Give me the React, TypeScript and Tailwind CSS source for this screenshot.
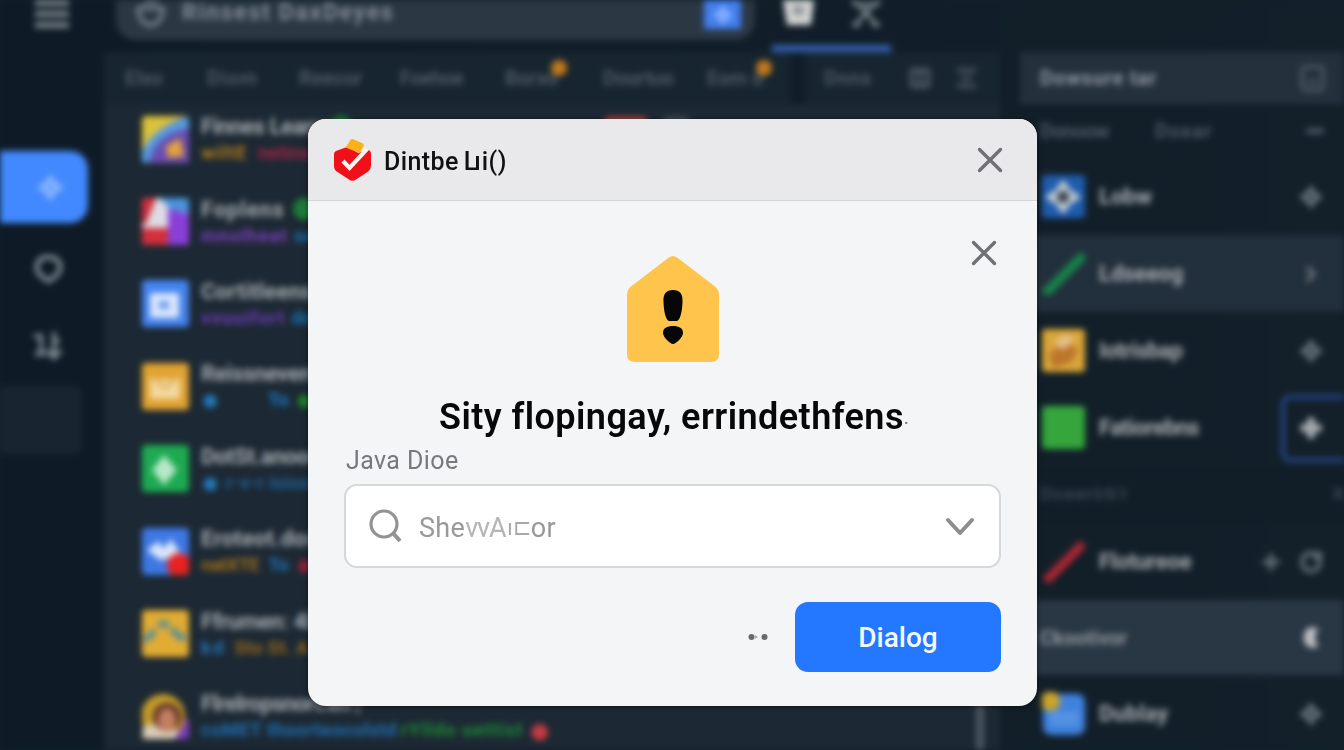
import type { ReactNode } from "react";
import { ChevronRight, Columns2, Minus, Plus, RotateCw } from "lucide-react";

interface Tag {
  text: string;
  className: string;
}

interface Item {
  title: string;
  titleClass: string;
  icon: ReactNode;
  tags: Tag[];
  badge?: boolean;
}

const ITEMS: Item[] = [
  {
    title: "Finnes Learns",
    titleClass: "tracking-[-0.4px] w-[121px]",
    badge: true,
    icon: (
      <>
        <rect width="47" height="47" fill="#dbc23a" />
        <path d="M47 0v47H0C4 22 20 8 47 0Z" fill="#4b86d6" />
        <path d="M8 47C12 27 25 17 47 13v34Z" fill="#6c4bb0" />
        <path d="M0 47C5 25 22 10 47 8" fill="none" stroke="#5a9be0" strokeWidth="7" />
        <path d="M24 30l14-8 4 18-16 2Z" fill="#e2a43c" />
      </>
    ),
    tags: [
      { text: "wiltE", className: "text-[#b07c1e] tracking-[1px]" },
      { text: "netins", className: "text-[#9a2646] ml-1" },
    ],
  },
  {
    title: "Foplens",
    titleClass: "tracking-[0.8px] w-[84px]",
    badge: true,
    icon: (
      <>
        <rect width="47" height="47" fill="#dddce3" />
        <path d="M0 0h14L4 26H0ZM0 30h26v17H0Z" fill="#d32f3c" />
        <path d="M26 10l21 6v31H26Z" fill="#8a3fd8" />
        <path d="M17 0h30v15L30 12Z" fill="#4a94dd" />
      </>
    ),
    tags: [
      { text: "mnolheat", className: "text-[#7440b6] tracking-[0.8px]" },
      { text: "sow", className: "text-[#1d6fab]" },
    ],
  },
  {
    title: "Cortitleens",
    titleClass: "tracking-[0.2px]",
    icon: (
      <>
        <rect width="47" height="47" fill="#4483ee" />
        <rect x="8" y="13" width="29" height="25" fill="#dbe7fc" />
        <rect x="17" y="21" width="10" height="8" fill="#6a9bee" />
      </>
    ),
    tags: [
      { text: "vvuuifort", className: "text-[#6a3cb0] tracking-[0.8px]" },
      { text: "dow", className: "text-[#1d6fab]" },
    ],
  },
  {
    title: "Reissnevents",
    titleClass: "tracking-[-0.3px]",
    icon: (
      <>
        <rect width="47" height="47" fill="#e0a231" />
        <path d="M8 12l8 4 14 0 8-4v24H8Z" fill="#f3d9a0" />
        <path d="M9 13l14 12 14-12" fill="none" stroke="#dfae58" strokeWidth="3" />
      </>
    ),
    tags: [
      { text: "●", className: "text-[#2577b8] w-[61px] text-[31px]" },
      { text: "To", className: "text-[#1e78c8]" },
      { text: "●", className: "text-[#217f2b] text-[31px]" },
    ],
  },
  {
    title: "DotSt.anoone",
    titleClass: "tracking-[-0.3px]",
    icon: (
      <>
        <rect width="47" height="47" fill="#1daa51" />
        <path d="M22 10l13 15-13 15-12-15Z" fill="#b9e8c9" />
      </>
    ),
    tags: [
      { text: "●", className: "text-[#2577b8] text-[31px]" },
      { text: "r-v-r isiosie", className: "text-[#205f94]" },
    ],
  },
  {
    title: "Eroteot.dox",
    titleClass: "tracking-[0.2px]",
    icon: (
      <>
        <rect width="47" height="47" fill="#3d78e4" />
        <path d="M5 22l12-9 4 8 8-10 11 17-22 4Z" fill="#dce8fb" />
        <circle cx="37" cy="37" r="12" fill="#e8231f" />
      </>
    ),
    tags: [
      { text: "natXTE", className: "text-[#9a6b1e] tracking-[-0.6px]" },
      { text: "To", className: "text-[#2173b2] ml-[3px]" },
      { text: "●", className: "text-[#8f2038] text-[31px]" },
    ],
  },
  {
    title: "Ffrumen: 4b",
    titleClass: "tracking-[-0.3px]",
    icon: (
      <>
        <rect width="47" height="47" fill="#e2ac33" />
        <path d="M2 29c6 0 8-5 10-9M16 14h11M30 18c3 5 5 9 14 10" fill="none" stroke="#5d8f94" strokeWidth="7" />
      </>
    ),
    tags: [
      { text: "kd", className: "text-[#2272b4] w-[27px] tracking-[2px]" },
      { text: "Sto St. A o", className: "text-[#8f641e]" },
    ],
  },
  {
    title: "Flrelropsnort.en |",
    titleClass: "tracking-[-0.6px]",
    icon: (
      <>
        <path d="M14 47h33V26Z" fill="#7a3fb8" />
        <circle cx="21" cy="24" r="22" fill="#c39b2c" />
        <path d="M1 35c8-5 28-3 36 6l-5 6H0Z" fill="#d9cdb8" />
        <circle cx="25" cy="25" r="14" fill="#5d3024" />
        <ellipse cx="25" cy="28" rx="9" ry="12" fill="#c47f63" />
      </>
    ),
    tags: [
      { text: "coMET thoorteocolstd", className: "text-[#1f6dad] w-[194px] tracking-[0.3px]" },
      { text: "rYlldo uettist", className: "text-[#1d8637] w-[121px] tracking-[0.9px]" },
      { text: "●", className: "text-[#c63a44] text-[38px]" },
    ],
  },
];

function Thumb({ children, size = 47 }: { children: ReactNode; size?: number }) {
  return (
    <svg width={size} height={size} viewBox="0 0 47 47" className="shrink-0 rounded-[4px]">
      {children}
    </svg>
  );
}

// small four-pointed marker used on the side rows
function Spark({ size = 24, className }: { size?: number; className?: string }) {
  return (
    <svg width={size} height={size} viewBox="0 0 24 24" fill="currentColor" className={className}>
      <path d="M12 0l5 7 7 5-7 5-5 7-5-7-7-5 7-5Zm0 9-3 3 3 3 3-3Z" fillRule="evenodd" />
    </svg>
  );
}

function ListRow({ item }: { item: Item }) {
  return (
    <div className="flex h-[82.4px] items-center gap-[12px] pl-[38px]">
      <Thumb>{item.icon}</Thumb>
      <div className="font-bold whitespace-nowrap">
        <div className="flex items-center gap-2 text-[22px] leading-[25px] text-[#a2a8ae]">
          <span className={item.titleClass}>{item.title}</span>
          {item.badge && <span className="size-[22px] rounded-full bg-[#1d7c37]" />}
        </div>
        <div className="flex h-[25px] gap-1.5 text-[19px] leading-[28px]">
          {item.tags.map((tag, i) => (
            <span key={i} className={tag.className}>
              {tag.text}
            </span>
          ))}
        </div>
      </div>
    </div>
  );
}

function Sidebar() {
  return (
    <aside className="flex w-[104px] shrink-0 flex-col text-[#828b92]">
      <div className="flex h-[151px] justify-center">
        <svg width="34" height="28" className="-ml-px" fill="#777f86">
          <path d="M0 0h34v6H0zM0 11h34v6H0zM0 22h34v6H0z" />
        </svg>
      </div>
      <div className="flex h-[72px] w-[88px] items-center justify-end rounded-r-[18px] bg-[#4289ff] pr-[24px]">
        <Spark size={27} className="text-[#8ab5ff]" />
      </div>
      <div className="flex h-[91px] items-center pl-[34px]">
        <svg width="29" height="31" fill="none" stroke="#828b92" strokeWidth="4.500">
          <path d="M14.500 28C7 23 2 20 3 13c1-6 5-9 11.500-9S25 7 26 13c1 7-4 10-11.500 15Z" />
        </svg>
      </div>
      <div className="flex h-[64px] items-center pl-[32px]">
        <svg width="31" height="28" fill="none" stroke="#828b92" strokeWidth="4">
          <path d="M2 4h7v18M3 22h11M22 0v26M15 18l7 8 7-8M22 9h6" />
        </svg>
      </div>
      <div className="mt-[8px] h-[68px] w-[82px] rounded-r-lg bg-[#182530]" />
    </aside>
  );
}

function TopBar() {
  return (
    <header className="flex h-[52px] shrink-0 pl-[12px]">
      <div className="flex h-[40px] w-[639px] rounded-b-[20px] bg-[#2b3844] pr-[14px] pl-[20px]">
        <svg width="29" height="27" fill="none" stroke="#77818a" strokeWidth="4">
          <path d="M2 7c0 24 25 24 25 0M2 8h25M8 1h14" />
        </svg>
        <span className="ml-[17px] text-[23px] leading-[26px] font-bold tracking-[1.7px] whitespace-nowrap text-[#828c94]">
          Rinsest DaxDeyes
        </span>
        <div className="ml-auto flex h-[29px] w-[37px] items-center justify-center bg-[#437fee]">
          <Spark size={20} className="text-[#8db6ff]" />
        </div>
      </div>
      <div className="ml-[17px] flex h-[54px] w-[119px] gap-[37px] border-b-[9px] border-[#315eae] pl-[11px]">
        <svg width="31" height="27">
          <path d="M0 0h31l-3 25H4Z" fill="#d2d3d2" />
          <path d="M10 6h11v9H10z" fill="#92979a" />
        </svg>
        <svg width="30" height="27" fill="none" stroke="#7f878e" strokeWidth="3.500">
          <path d="M3 0v6M27 0v6M5 2l20 22M25 2 5 24M1 25h8M21 25h8M10 4h10" />
        </svg>
      </div>
    </header>
  );
}

function Flagged({ children, className }: { children: ReactNode; className: string }) {
  return (
    <span className={className}>
      <span className="relative">
        {children}
        <span className="absolute -top-[6px] -right-[9px] size-[16px] rounded-full bg-[#c07a1e]" />
      </span>
    </span>
  );
}

function MainPanel() {
  return (
    <main className="relative flex w-[896px] shrink-0 flex-col bg-[#1c2833]">
      <div className="flex h-[52px] shrink-0 items-center bg-[#172530] text-[20px] font-bold text-[#4b5762]">
        <span className="w-[83px] pl-[21px]">Elxo</span>
        <span className="w-[92px] pl-[20px] tracking-[1px]">Diom</span>
        <span className="w-[103px] pl-[20px]">Reecor</span>
        <span className="w-[103px] pl-[18px] tracking-[-0.5px]">Foehoe</span>
        <Flagged className="w-[98px] pl-[20px]">Borxd</Flagged>
        <span className="w-[103px] pl-[20px] tracking-[-0.3px]">Dourtuo</span>
        <Flagged className="w-[101px] pl-[21px]">Eom d</Flagged>
        <span className="ml-[3px] h-full w-[15px] bg-[#101d29]" />
        <span className="w-[95px] pl-[19px] tracking-[0.5px]">Dnns</span>
        <span className="flex gap-[25px] pl-[9px]">
          <Columns2 size={22} strokeWidth={5} />
          <svg width="21" height="22" fill="none" stroke="currentColor" strokeWidth="4">
            <path d="M1 3h19M5 11h11M1 19h19" />
          </svg>
        </span>
      </div>
      <div className="-mt-[6px]">
        {ITEMS.map((item) => (
          <ListRow key={item.title} item={item} />
        ))}
      </div>
      {/* status chips of the first row */}
      <div className="absolute top-[65px] left-[501px] flex gap-[16px]">
        <span className="h-6 w-[42px] rounded bg-[#b3463c]" />
        <span className="h-6 w-[26px] rounded bg-[#44505b]" />
      </div>
      {/* scrollbar */}
      <div className="absolute right-[16px] bottom-0 h-[138px] w-[8px] bg-[#4a5560]" />
    </main>
  );
}

interface SideRowProps {
  icon: ReactNode;
  label: string;
  labelClass?: string;
  active?: boolean;
  action?: ReactNode;
}

function SideRow({ icon, label, labelClass, active, action }: SideRowProps) {
  return (
    <div className={`flex h-[77px] shrink-0 items-center pr-[21px] pl-[22px] ${active ? "bg-[#222f3c]" : ""}`}>
      <Thumb size={43}>{icon}</Thumb>
      <span className={`ml-[14px] text-[22px] font-bold text-[#a8acb1] ${labelClass ?? ""}`}>{label}</span>
      <span className="ml-auto flex gap-[16px] text-[#68717a]">{action}</span>
    </div>
  );
}

function RightPanel() {
  return (
    <section className="ml-[20px] flex w-[324px] shrink-0 flex-col">
      <div className="flex h-[52px] shrink-0 items-center justify-between bg-[#24303c] pr-[19px] pl-[20px]">
        <span className="text-[20px] font-bold tracking-[0.8px] text-[#8d969f]">Dowsure tar</span>
        <svg width="25" height="27" fill="none" stroke="#56616c" strokeWidth="3">
          <rect x="2" y="2" width="21" height="23" rx="4" />
          <path d="M7 17h11" />
        </svg>
      </div>
      <div className="flex h-[54px] shrink-0 items-center pl-[20px] text-[20px] font-bold text-[#4b5661]">
        <span className="w-[115px] tracking-[-0.6px]">Donoow</span>
        <span className="tracking-[1px]">Doxar</span>
        <Minus size={22} strokeWidth={6} className="mr-[18px] ml-auto" />
      </div>
      <SideRow
        label="Lobw"
        icon={
          <>
            <rect width="47" height="47" fill="#1f5cae" />
            <path d="M23 5l8 11 12 8-12 8-8 11-8-11-12-8 12-8Z" fill="#c8cfd2" />
            <circle cx="23" cy="24" r="7" fill="#3c4856" />
          </>
        }
        action={<Spark />}
      />
      <SideRow
        active
        label="Ldseeog"
        icon={<path d="M3 46 46 3" stroke="#17834a" strokeWidth="10" />}
        action={<ChevronRight size={24} strokeWidth={4} />}
      />
      <SideRow
        label="Iotrisbap"
        labelClass="tracking-[-0.5px]"
        icon={
          <>
            <rect width="47" height="47" fill="#d9a538" />
            <path d="M7 28 24 14l16 8-8 14-19 7Z" fill="#bb762c" />
            <path d="M12 14l13-8 12 5-14 12Z" fill="#e4c08a" />
          </>
        }
        action={<Spark />}
      />
      <div className="relative">
        <SideRow
          label="Fatiorebns"
          labelClass="tracking-[-0.5px]"
          icon={<rect width="47" height="47" fill="#35a53c" />}
          action={<Plus size={24} strokeWidth={8} className="text-[#a5aab0]" />}
        />
        <div className="absolute top-[6px] left-[261px] h-[67px] w-[90px] rounded-[9px] border-[4px] border-[#24488f]" />
      </div>
      <div className="flex h-[57px] shrink-0 items-center justify-between bg-[#111e28] pl-[20px] text-[19px] font-bold text-[#36424d]">
        <span className="tracking-[0.5px]">Doeerirb'r</span>
        <span>X</span>
      </div>
      <SideRow
        label="Flotureoe"
        labelClass="tracking-[-0.2px]"
        icon={<path d="M4 45 45 4" stroke="#a92730" strokeWidth="10" />}
        action={
          <>
            <Plus size={24} strokeWidth={4} />
            <RotateCw size={24} strokeWidth={4} />
          </>
        }
      />
      <div className="flex h-[75px] shrink-0 items-center justify-between bg-[#293644] pr-[20px] pl-[20px] text-[20px] font-bold text-[#8b939c]">
        Ckootivor
        <svg width="24" height="24">
          <path d="M17 3C6 0 4 8 5 14s7 8 12 6c-4-4-4-12 0-17Z" fill="#bdc1c6" stroke="#bdc1c6" strokeWidth="2" />
        </svg>
      </div>
      <SideRow
        label="Dublay"
        labelClass="tracking-[0.3px]"
        icon={
          <>
            <rect x="1" y="2" width="46" height="45" rx="9" fill="#3f82de" />
            <path d="M9 25h31M9 33h31" stroke="#75a9ed" strokeWidth="3" />
            <circle cx="9" cy="10" r="11" fill="#caa32b" />
          </>
        }
        action={<Spark />}
      />
    </section>
  );
}

function CloseIcon() {
  return (
    <svg width="26" height="26" viewBox="0 0 26 26" fill="none" stroke="#707175" strokeWidth="3.4" strokeLinecap="round">
      <path d="M2.500 2.500l21 21M23.500 2.500l-21 21" />
    </svg>
  );
}

function Dialog() {
  return (
    <div
      role="dialog"
      className="absolute top-[119px] left-[308px] flex h-[587px] w-[729px] flex-col overflow-hidden rounded-[18px] bg-[#f4f5f7] font-['Roboto',sans-serif] shadow-[0_1px_5px_rgba(0,0,0,0.5)]"
    >
      <div className="flex h-[82px] shrink-0 items-center border-b border-[#d6d6d9] bg-[#e9e9ec] pr-[34px] pl-[25px]">
        <svg width="40" height="44" viewBox="0 0 40 44">
          <path
            d="M3 13 12.500 9.500q2-.8 4 0L25 15l10-3q3 .5 3 4v11c0 3-1 5-3.500 7L23 41.500q-3.500 2.500-7 0L4.500 34Q1 32 1 28V16q0-2 2-3Z"
            fill="#f1101a"
          />
          <path d="M17.500 2q1-1.500 3-.8l9 4q2 1.200 1 3L26.500 15 12.500 9.500Z" fill="#f9b21c" />
          <path d="M10 23l6.500 7L34 11" fill="none" stroke="#fff3ed" strokeWidth="4.200" />
        </svg>
        <h1 className="mt-[4px] ml-[11px] flex text-[25px] leading-8 font-medium tracking-[0.4px] text-[#111]">
          <span>Dintbe</span>
          <span className="ml-[5px] tracking-[-3px]">Lı</span>
          <span className="ml-[4px]">i()</span>
        </h1>
        <button className="ml-auto" aria-label="Close">
          <CloseIcon />
        </button>
      </div>

      <div className="flex flex-1 flex-col px-[36px]">
        <div className="flex h-[65px] items-end justify-end pr-[4px]">
          <button aria-label="Dismiss" className="block">
            <CloseIcon />
          </button>
        </div>
        <svg width="94" height="108" viewBox="0 0 94 108" className="-mt-[11px] ml-[282px] shrink-0">
          <path
            d="M41.500 3.500Q47-1.500 52.500 3.500L89 31.500q4 3.500 4 8V99q0 8-8 8H9q-8 0-8-8V39.500q0-4.500 4-8Z"
            fill="#ffc44b"
          />
          <path d="M47 35c7 0 10 4 9.500 12-.4 12-3 19-6 19h-7c-3 0-5.600-7-6-19C37 39 40 35 47 35Z" fill="#070707" />
          <path d="M47 71c6 0 10 2 10 7 0 4-7 11-10 11s-10-7-10-11c0-5 4-7 10-7Z" fill="#070707" />
        </svg>
        <h2 className="mt-[32px] ml-[95px] flex text-[36px] leading-[44px] font-semibold tracking-[0.45px] whitespace-nowrap text-[#080808]">
          <span>Sity flopingay, errindethfens</span>
          <span className="text-[20px] font-normal text-[#77787a]">.</span>
        </h2>
        <label className="mt-[7px] ml-[2px] text-[25px] leading-[30px] tracking-[0.4px] text-[#77797c]">Java Dioe</label>
        <div className="mt-[8px] flex h-[84px] w-[657px] shrink-0 items-center rounded-[13px] border-2 border-[#d6d7d9] bg-white pr-[24px] pl-[23px]">
          <svg width="34" height="34" viewBox="0 0 34 34" fill="none" stroke="#929395" strokeWidth="3.200">
            <circle cx="15" cy="15" r="13" />
            <path d="M24 24l7 8" strokeWidth="4" />
          </svg>
          <span className="ml-[16px] flex pt-[3px] text-[27px] leading-8 text-[#98999b]">
            <span className="tracking-[0.3px]">She</span>
            <span className="tracking-[-1.2px] text-[#b5b5b6]">vvA</span>
            <span className="ml-[2px] text-[22px] text-[#a8a8a9]">ı⊏</span>
            <span className="tracking-[0.4px]">or</span>
          </span>
          <svg width="30" height="20" viewBox="0 0 30 20" className="mt-[2px] ml-auto" fill="none" stroke="#8c8d90" strokeWidth="4" strokeLinecap="round" strokeLinejoin="round">
            <path d="M3 3l12 13L27 3" />
          </svg>
        </div>
        <div className="mt-[34px] flex items-center justify-end">
          <svg width="20" height="8" viewBox="0 0 20 8" className="mr-[27px]" fill="#69696b">
            <circle cx="3.500" cy="4" r="3" />
            <path d="M7 2l3 2-3 2Z" opacity=".5" />
            <circle cx="16.500" cy="4" r="3" />
          </svg>
          <button className="h-[70px] w-[206px] rounded-[13px] bg-[#2478ff] pt-[2px] text-[28px] font-medium text-[#f5f8ff]">
            Dialog
          </button>
        </div>
      </div>
    </div>
  );
}

export default function App() {
  return (
    <div className="relative h-[750px] w-[1344px] overflow-hidden bg-[#11202b] font-['Roboto',sans-serif]">
      <div className="flex h-[750px] w-[1344px] bg-linear-to-r from-[#0e1b27] to-[#13202a] blur-[3.2px]">
        <Sidebar />
        <div className="flex flex-1 flex-col">
          <TopBar />
          <div className="flex h-[698px] overflow-hidden">
            <MainPanel />
            <RightPanel />
          </div>
        </div>
      </div>
      <Dialog />
    </div>
  );
}
